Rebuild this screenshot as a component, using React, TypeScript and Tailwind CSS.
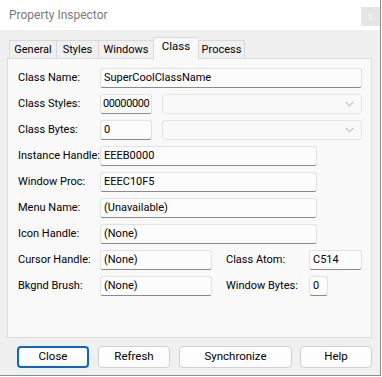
import React from "react";

const font = { fontFamily: "Roboto, 'Liberation Sans', sans-serif" };

function Edit({ value, className = "" }: { value: string; className?: string }) {
  return (
    <div
      className={`h-[20px] flex items-center pl-[3px] bg-[#fcfcfc] border border-[#e2e2e2] border-b-[#8a8a8a] rounded-[3px] text-black whitespace-nowrap overflow-hidden ${className}`}
    >
      {value}
    </div>
  );
}

function Combo() {
  return (
    <div className="h-[20px] w-[200px] flex items-center justify-end pr-[7px] bg-[#f9f9f9] border border-[#e5e5e5] rounded-[3px]">
      <svg width="9" height="6" viewBox="0 0 9 6">
        <path d="M0.5 0.8 L4.5 4.8 L8.5 0.8" fill="none" stroke="#a6a6a6" strokeWidth="1" />
      </svg>
    </div>
  );
}

function Label({ children, className = "w-[82px]" }: { children: React.ReactNode; className?: string }) {
  return <div className={`shrink-0 text-black whitespace-nowrap ${className}`}>{children}</div>;
}

function Btn({ children, w, primary }: { children: React.ReactNode; w: string; primary?: boolean }) {
  return (
    <div
      className={`h-[22px] ${w} flex items-center justify-center rounded-[4px] bg-[#fdfdfd] text-black ${
        primary ? "border-2 border-[#0a67c2]" : "border border-[#d0d0d0]"
      }`}
    >
      {children}
    </div>
  );
}

const tabs = [
  { name: "General", w: "w-[47px]" },
  { name: "Styles", w: "w-[42px]" },
  { name: "Windows", w: "w-[55px]" },
  { name: "Class", w: "w-[45px]", active: true },
  { name: "Process", w: "w-[47px]" },
];

export default function App() {
  return (
    <div className="w-[382px] h-[377px] bg-white text-[11px]" style={font}>
      <div className="w-[381px] h-[376px] bg-[#f0f0f0] border-r border-b border-[#8e8e8e] flex flex-col">
        {/* Title bar */}
        <div className="h-[30px] bg-white flex items-center justify-between pl-[9px] pr-[0px] shrink-0">
          <span className="text-[12px] text-[#7a7a7a]">Property Inspector</span>
          <div className="w-[19px] h-[19px] bg-[#e5e5e5] flex items-center justify-center text-[10px] text-[#f8f8f8] mt-[2px]">
            x
          </div>
        </div>

        {/* Tabs */}
        <div className="flex items-end h-[28px] pl-[9px] pt-[7px] shrink-0">
          {tabs.map((t, i) => (
            <div
              key={t.name}
              className={`${t.w} flex items-center justify-center border-t border-l border-[#d9d9d9] ${
                i === tabs.length - 1 ? "border-r" : ""
              } ${t.active ? "h-[22px] bg-[#f9f9f9] relative z-10 -mb-px pb-[3px] text-black text-[11.5px]" : "h-[18px] bg-[#f0f0f0] pt-[1px]"}`}
            >
              {t.name}
            </div>
          ))}
        </div>

        {/* Panel */}
        <div className="ml-[7px] w-[365px] h-[280px] bg-[#f9f9f9] border border-[#dcdcdc] shrink-0 pt-[9px] pl-[10px] pr-[9px] flex flex-col gap-[6px]">
          <div className="flex items-center">
            <Label>Class Name:</Label>
            <Edit value="SuperCoolClassName" className="w-[262px]" />
          </div>
          <div className="flex items-center">
            <Label>Class Styles:</Label>
            <Edit value="00000000" className="w-[52px] !pl-[2px] tracking-[-0.4px] border-[#b4b4b4] border-b-[#8a8a8a]" />
            <div className="ml-[10px]">
              <Combo />
            </div>
          </div>
          <div className="flex items-center">
            <Label>Class Bytes:</Label>
            <Edit value="0" className="w-[52px] border-[#b4b4b4] border-b-[#8a8a8a]" />
            <div className="ml-[10px]">
              <Combo />
            </div>
          </div>
          <div className="flex items-center">
            <Label>Instance Handle:</Label>
            <Edit value="EEEB0000" className="w-[217px]" />
          </div>
          <div className="flex items-center">
            <Label>Window Proc:</Label>
            <Edit value="EEEC10F5" className="w-[217px]" />
          </div>
          <div className="flex items-center">
            <Label>Menu Name:</Label>
            <Edit value="(Unavailable)" className="w-[217px]" />
          </div>
          <div className="flex items-center">
            <Label>Icon Handle:</Label>
            <Edit value="(None)" className="w-[217px]" />
          </div>
          <div className="flex items-center">
            <Label>Cursor Handle:</Label>
            <Edit value="(None)" className="w-[112px]" />
            <Label className="w-[83px] ml-[14px]">Class Atom:</Label>
            <Edit value="C514" className="w-[53px]" />
          </div>
          <div className="flex items-center">
            <Label>Bkgnd Brush:</Label>
            <Edit value="(None)" className="w-[112px]" />
            <Label className="w-[83px] ml-[14px]">Window Bytes:</Label>
            <Edit value="0" className="w-[19px]" />
          </div>
        </div>

        {/* Buttons */}
        <div className="flex items-center pl-[17px] mt-[8px] text-[11.5px]">
          <Btn w="w-[72px]" primary>
            Close
          </Btn>
          <div className="ml-[9px]">
            <Btn w="w-[72px]">Refresh</Btn>
          </div>
          <div className="ml-[9px]">
            <Btn w="w-[113px]">Synchronize</Btn>
          </div>
          <div className="ml-[8px]">
            <Btn w="w-[72px]">Help</Btn>
          </div>
        </div>
      </div>
    </div>
  );
}
